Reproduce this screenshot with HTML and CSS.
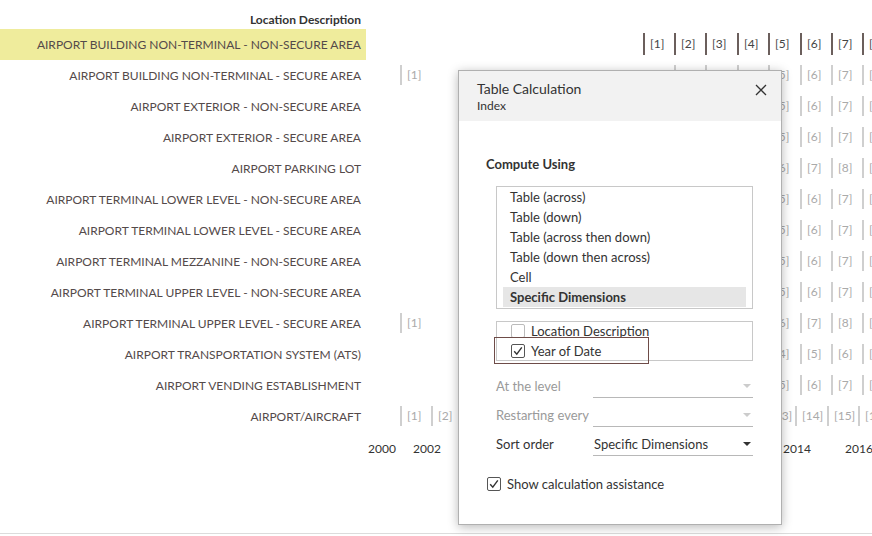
FILE: index.html
```html
<!DOCTYPE html>
<html>
<head>
<meta charset="utf-8">
<link rel="stylesheet" href="styles.css">
</head>
<body>
<div class="page">
  <div class="view">
    <div class="labels">
      <div class="hdr">Location Description</div>
      <div class="lrow hl">AIRPORT BUILDING NON-TERMINAL - NON-SECURE AREA</div>
      <div class="lrow">AIRPORT BUILDING NON-TERMINAL - SECURE AREA</div>
      <div class="lrow">AIRPORT EXTERIOR - NON-SECURE AREA</div>
      <div class="lrow">AIRPORT EXTERIOR - SECURE AREA</div>
      <div class="lrow">AIRPORT PARKING LOT</div>
      <div class="lrow">AIRPORT TERMINAL LOWER LEVEL - NON-SECURE AREA</div>
      <div class="lrow">AIRPORT TERMINAL LOWER LEVEL - SECURE AREA</div>
      <div class="lrow">AIRPORT TERMINAL MEZZANINE - NON-SECURE AREA</div>
      <div class="lrow">AIRPORT TERMINAL UPPER LEVEL - NON-SECURE AREA</div>
      <div class="lrow">AIRPORT TERMINAL UPPER LEVEL - SECURE AREA</div>
      <div class="lrow">AIRPORT TRANSPORTATION SYSTEM (ATS)</div>
      <div class="lrow">AIRPORT VENDING ESTABLISHMENT</div>
      <div class="lrow">AIRPORT/AIRCRAFT</div>
    </div>
    <div class="chart">
      <div class="chart-hdr"></div>
      <div class="crow">
        <span class="mark dark" style="left:277px">[1]</span>
        <span class="mark dark" style="left:308px">[2]</span>
        <span class="mark dark" style="left:339px">[3]</span>
        <span class="mark dark" style="left:371px">[4]</span>
        <span class="mark dark" style="left:402px">[5]</span>
        <span class="mark dark" style="left:434px">[6]</span>
        <span class="mark dark" style="left:465px">[7]</span>
        <span class="mark dark" style="left:496px">[8]</span>
      </div>
      <div class="crow">
        <span class="mark" style="left:34px">[1]</span>
        <span class="mark" style="left:308px">[2]</span>
        <span class="mark" style="left:339px">[3]</span>
        <span class="mark" style="left:371px">[4]</span>
        <span class="mark" style="left:402px">[5]</span>
        <span class="mark" style="left:434px">[6]</span>
        <span class="mark" style="left:465px">[7]</span>
        <span class="mark" style="left:496px">[8]</span>
      </div>
      <div class="crow">
        <span class="mark" style="left:402px">[5]</span>
        <span class="mark" style="left:434px">[6]</span>
        <span class="mark" style="left:465px">[7]</span>
        <span class="mark" style="left:496px">[8]</span>
      </div>
      <div class="crow">
        <span class="mark" style="left:402px">[5]</span>
        <span class="mark" style="left:434px">[6]</span>
        <span class="mark" style="left:465px">[7]</span>
        <span class="mark" style="left:496px">[8]</span>
      </div>
      <div class="crow">
        <span class="mark" style="left:402px">[6]</span>
        <span class="mark" style="left:434px">[7]</span>
        <span class="mark" style="left:465px">[8]</span>
        <span class="mark" style="left:496px">[9]</span>
      </div>
      <div class="crow">
        <span class="mark" style="left:402px">[5]</span>
        <span class="mark" style="left:434px">[6]</span>
        <span class="mark" style="left:465px">[7]</span>
        <span class="mark" style="left:496px">[8]</span>
      </div>
      <div class="crow">
        <span class="mark" style="left:402px">[5]</span>
        <span class="mark" style="left:434px">[6]</span>
        <span class="mark" style="left:465px">[7]</span>
        <span class="mark" style="left:496px">[8]</span>
      </div>
      <div class="crow">
        <span class="mark" style="left:402px">[5]</span>
        <span class="mark" style="left:434px">[6]</span>
        <span class="mark" style="left:465px">[7]</span>
        <span class="mark" style="left:496px">[8]</span>
      </div>
      <div class="crow">
        <span class="mark" style="left:402px">[5]</span>
        <span class="mark" style="left:434px">[6]</span>
        <span class="mark" style="left:465px">[7]</span>
        <span class="mark" style="left:496px">[8]</span>
      </div>
      <div class="crow">
        <span class="mark" style="left:34px">[1]</span>
        <span class="mark" style="left:402px">[6]</span>
        <span class="mark" style="left:434px">[7]</span>
        <span class="mark" style="left:465px">[8]</span>
        <span class="mark" style="left:496px">[9]</span>
      </div>
      <div class="crow">
        <span class="mark" style="left:402px">[4]</span>
        <span class="mark" style="left:434px">[5]</span>
        <span class="mark" style="left:465px">[6]</span>
        <span class="mark" style="left:496px">[7]</span>
      </div>
      <div class="crow">
        <span class="mark" style="left:402px">[5]</span>
        <span class="mark" style="left:434px">[6]</span>
        <span class="mark" style="left:465px">[7]</span>
        <span class="mark" style="left:496px">[8]</span>
      </div>
      <div class="crow">
        <span class="mark" style="left:34px">[1]</span>
        <span class="mark" style="left:65px">[2]</span>
        <span class="mark" style="left:398px">[13]</span>
        <span class="mark" style="left:429px">[14]</span>
        <span class="mark" style="left:461px">[15]</span>
        <span class="mark" style="left:492px">[16]</span>
      </div>
      <div class="axis">
        <span class="year" style="left:2px">2000</span>
        <span class="year" style="left:47px">2002</span>
        <span class="year" style="left:417px">2014</span>
        <span class="year" style="left:479px">2016</span>
      </div>
    </div>
  </div>

  <div class="dialog">
    <div class="dlg-head">
      <div class="dlg-titles">
        <div class="dlg-title">Table Calculation</div>
        <div class="dlg-sub">Index</div>
      </div>
      <svg class="close" width="12" height="12" viewBox="0 0 12 12"><path d="M1 1 L11 11 M11 1 L1 11" stroke="#333" stroke-width="1.3" fill="none"/></svg>
    </div>
    <div class="dlg-body">
      <div class="section-title">Compute Using</div>
      <div class="listbox">
        <div class="opt">Table (across)</div>
        <div class="opt">Table (down)</div>
        <div class="opt">Table (across then down)</div>
        <div class="opt">Table (down then across)</div>
        <div class="opt">Cell</div>
        <div class="opt sel">Specific Dimensions</div>
      </div>
      <div class="dims">
        <div class="dim"><span class="cb off"></span>Location Description</div>
        <div class="dim focus"><span class="cb"><svg width="14" height="14" viewBox="0 0 14 14"><path d="M3.2 7.2 L5.8 10.2 L10.8 3.4" stroke="#333" stroke-width="1.4" fill="none"/></svg></span>Year of Date</div>
      </div>
      <div class="field disabled">
        <span class="flabel">At the level</span>
        <span class="select"><span class="sval"></span><span class="caret"></span></span>
      </div>
      <div class="field disabled">
        <span class="flabel">Restarting every</span>
        <span class="select"><span class="sval"></span><span class="caret"></span></span>
      </div>
      <div class="field">
        <span class="flabel">Sort order</span>
        <span class="select"><span class="sval">Specific Dimensions</span><span class="caret"></span></span>
      </div>
      <div class="assist"><span class="cb"><svg width="14" height="14" viewBox="0 0 14 14"><path d="M3.2 7.2 L5.8 10.2 L10.8 3.4" stroke="#333" stroke-width="1.4" fill="none"/></svg></span>Show calculation assistance</div>
    </div>
  </div>
</div>
</body>
</html>
```

FILE: styles.css
```css
* { box-sizing: border-box; }
html, body { margin: 0; padding: 0; background: #fff; }
body { width: 872px; height: 536px; overflow: hidden; font-family: Lato, "Open Sans", sans-serif; }

.page { position: relative; width: 872px; height: 536px; }

.view {
  display: flex;
  height: 534px;
  border-bottom: 1px solid #dcdcdc;
}

.labels { width: 366px; flex: none; }
.hdr {
  height: 29px;
  padding: 12px 5px 0 0;
  text-align: right;
  font-size: 12px;
  line-height: 15px;
  font-weight: bold;
  color: #333;
}
.lrow {
  height: 31px;
  line-height: 31px;
  padding-right: 5px;
  text-align: right;
  font-size: 12px;
  color: #544a4a;
  white-space: nowrap;
}
.lrow.hl { background: #efec9c; }

.chart { flex: 1; position: relative; }
.chart-hdr { height: 29px; }
.crow { position: relative; height: 31px; }
.mark {
  position: absolute;
  top: 5px;
  height: 20px;
  line-height: 20px;
  padding-left: 7px;
  font-size: 12px;
  color: #aaa;
  white-space: nowrap;
}
.mark::before {
  content: "";
  position: absolute;
  left: 0;
  top: 0;
  width: 2px;
  height: 20px;
  background: #cfcfcf;
}
.mark.dark { color: #444; top: 4px; height: 22px; line-height: 22px; }
.mark.dark::before { background: #6b5f5c; height: 22px; }

.axis { position: relative; height: 34px; }
.year {
  position: absolute;
  top: 10px;
  font-size: 12px;
  line-height: 14px;
  color: #333;
}

/* dialog */
.dialog {
  position: absolute;
  left: 458px;
  top: 70px;
  width: 324px;
  height: 455px;
  background: #fff;
  border: 1px solid #b0b0b0;
  box-shadow: 0 2px 10px rgba(0,0,0,0.28);
  color: #333;
}
.dlg-head {
  display: flex;
  justify-content: space-between;
  background: #f2f2f2;
  height: 50px;
  padding: 9px 14px 0 18px;
}
.dlg-title { font-size: 14px; line-height: 18px; color: #333; }
.dlg-sub { font-size: 12px; line-height: 16px; color: #333; }
.close { margin-top: 4px; }

.dlg-body { padding: 0 27px; }
.section-title {
  margin-top: 34px;
  font-size: 13px;
  line-height: 18px;
  font-weight: bold;
  color: #333;
}
.listbox {
  margin: 13px 0 0 10px;
  width: 257px;
  height: 123px;
  border: 1px solid #c8c8c8;
  padding: 0 6px;
}
.opt {
  height: 20px;
  line-height: 20px;
  padding-left: 7px;
  font-size: 13px;
  color: #333;
}
.opt.sel { background: #e6e6e6; font-weight: bold; }

.dims {
  margin: 12px 0 0 10px;
  width: 257px;
  height: 40px;
  border: 1px solid #c8c8c8;
  padding-left: 14px;
}
.dim {
  position: relative;
  display: flex;
  align-items: center;
  height: 20px;
  font-size: 13px;
  color: #333;
}
.dim:first-child { height: 20px; margin-top: -1px; }
.dim.focus::after {
  content: "";
  position: absolute;
  left: -17px;
  top: -4px;
  width: 153px;
  height: 25px;
  border: 1px solid #6e4c48;
}
.cb {
  width: 14px;
  height: 14px;
  flex: none;
  border: 1px solid #555;
  border-radius: 2px;
  margin-right: 6px;
  display: flex;
  align-items: center;
  justify-content: center;
  background: #fff;
}
.cb svg { display: block; margin: -1px; }
.cb.off { border-color: #bbb; }

.field {
  display: flex;
  align-items: flex-end;
  margin: 0 0 8px 10px;
  font-size: 13px;
  color: #333;
}
.dims + .field { margin-top: 16px; }
.field.disabled { color: #9a9a9a; }
.flabel { width: 97px; line-height: 18px; padding-bottom: 3px; white-space: nowrap; }
.select {
  display: flex;
  justify-content: space-between;
  align-items: center;
  width: 160px;
  height: 21px;
  padding: 0 1px 2px 1px;
  border-bottom: 1px solid #b8b8b8;
}
.sval { line-height: 18px; }
.caret {
  width: 0;
  height: 0;
  border-left: 4px solid transparent;
  border-right: 4px solid transparent;
  border-top: 4px solid #333;
  margin-right: 1px;
}
.field.disabled .caret { border-top-color: #ccc; }

.assist {
  display: flex;
  align-items: center;
  margin-top: 19px;
  margin-left: 1px;
  height: 18px;
  font-size: 13px;
  color: #333;
}
```
